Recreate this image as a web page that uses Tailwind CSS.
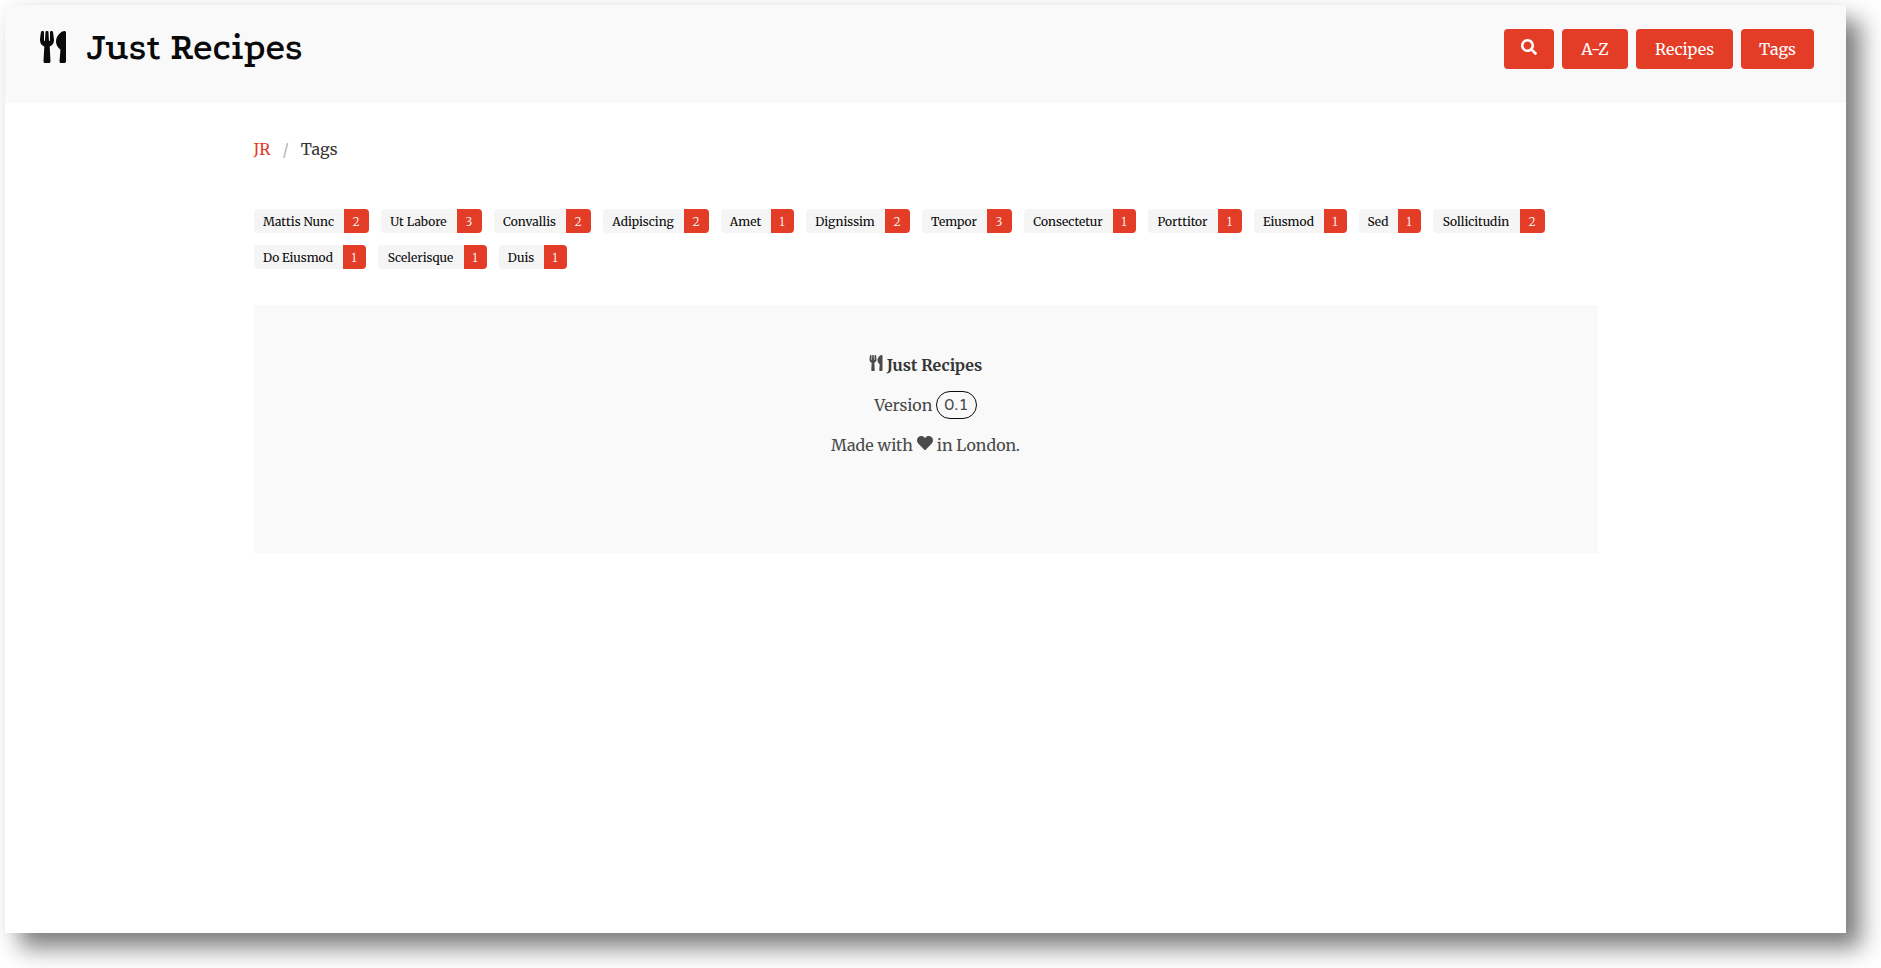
<!DOCTYPE html>
<html lang="en">
<head>
<meta charset="utf-8">
<meta name="viewport" content="width=device-width, initial-scale=1">
<title>Just Recipes – Tags</title>
<script src="https://cdn.jsdelivr.net/npm/@tailwindcss/browser@4"></script>
</head>
<body class="flex min-h-screen bg-white pt-[5px] pr-[35px] pb-[35px] pl-[5px] font-['Merriweather','DejaVu_Serif_Condensed','DejaVu_Serif',serif] text-base leading-6 text-[#4a4a4a]">
<svg class="hidden" aria-hidden="true">
  <symbol id="utensils" viewBox="0 0 416 512"><path d="M207.9 15.2c.8 4.7 16.1 94.5 16.1 128.8 0 52.3-27.8 89.6-68.9 104.6L168 486.7c.7 13.7-10.2 25.3-24 25.3H80c-13.7 0-24.7-11.5-24-25.3l12.9-238.1C27.7 233.6 0 196.2 0 144 0 109.6 15.3 19.9 16.1 15.2 19.3-5.1 61.4-5.4 64 16.3v141.2c1.3 3.4 15.1 3.2 16 0 1.4-25.3 7.9-139.2 8-141.8 3.3-20.8 44.7-20.8 47.9 0 .2 2.7 6.6 116.5 8 141.8.9 3.2 14.8 3.4 16 0V16.3c2.6-21.6 44.8-21.4 47.9-1.1zm119.2 285.7l-15 185.1c-1.2 14 9.9 26 23.9 26h56c13.3 0 24-10.7 24-24V24c0-13.2-10.7-24-24-24-82.5 0-221.4 178.5-64.9 300.9z"/></symbol>
</svg>
<div class="flex-1 bg-white shadow-[15px_15px_22px_rgba(0,0,0,0.5),0_0_14px_rgba(0,0,0,0.04)]">
  <header class="flex h-[98px] items-start justify-between bg-[#f9f9f9] pr-8 pl-[35px]">
    <a href="#" class="flex items-center gap-5 pt-[18px] text-[#0a0a0a]">
      <svg class="h-8 w-[26px] fill-current" aria-hidden="true"><use href="#utensils"/></svg>
      <h1 class="font-['Podkova','DejaVu_Serif',serif] text-[38px] leading-[48px] font-semibold">Just Recipes</h1>
    </a>
    <nav class="flex gap-2 pt-6 text-white" aria-label="Main">
      <button type="button" aria-label="Search" class="flex h-10 w-[50px] justify-center rounded bg-[#e43d27] pt-[10px]">
        <svg class="size-4 fill-current" viewBox="0 0 512 512" aria-hidden="true"><path d="M505 442.7L405.3 343c-4.5-4.5-10.6-7-17-7H372c27.6-35.3 44-79.7 44-128C416 93.1 322.9 0 208 0S0 93.1 0 208s93.1 208 208 208c48.3 0 92.7-16.4 128-44v16.3c0 6.4 2.5 12.5 7 17l99.7 99.7c9.4 9.4 24.6 9.4 33.9 0l28.3-28.3c9.4-9.4 9.4-24.6.1-34zM208 336c-70.7 0-128-57.2-128-128 0-70.7 57.2-128 128-128 70.7 0 128 57.2 128 128 0 70.7-57.2 128-128 128z"/></svg>
      </button>
      <a href="#" class="flex h-10 w-[66px] items-center justify-center rounded bg-[#e43d27]">A-Z</a>
      <a href="#" class="flex h-10 w-[97px] items-center justify-center rounded bg-[#e43d27]">Recipes</a>
      <a href="#" class="flex h-10 w-[73px] items-center justify-center rounded bg-[#e43d27]">Tags</a>
    </nav>
  </header>
  <main class="mx-auto max-w-[1344px]">
    <nav class="flex pt-[34px]" aria-label="Breadcrumb">
      <a href="#" class="text-[#e43d27]">JR</a>
      <span class="px-3 text-[#b5b5b5]">/</span>
      <a href="#" class="text-[#363636]" aria-current="page">Tags</a>
    </nav>
    <div class="flex flex-wrap gap-3 pt-12 text-xs text-[#0a0a0a]">
      <a href="#" class="flex h-6 overflow-hidden rounded bg-[#f5f5f5] leading-[26px]"><span class="w-[90px] text-center">Mattis Nunc</span><span class="w-[25px] bg-[#e43d27] text-center font-light text-white">2</span></a>
      <a href="#" class="flex h-6 overflow-hidden rounded bg-[#f5f5f5] leading-[26px]"><span class="w-[76px] text-center">Ut Labore</span><span class="w-[25px] bg-[#e43d27] text-center font-light text-white">3</span></a>
      <a href="#" class="flex h-6 overflow-hidden rounded bg-[#f5f5f5] leading-[26px]"><span class="w-[72px] text-center">Convallis</span><span class="w-[25px] bg-[#e43d27] text-center font-light text-white">2</span></a>
      <a href="#" class="flex h-6 overflow-hidden rounded bg-[#f5f5f5] leading-[26px]"><span class="w-[81px] text-center">Adipiscing</span><span class="w-[25px] bg-[#e43d27] text-center font-light text-white">2</span></a>
      <a href="#" class="flex h-6 overflow-hidden rounded bg-[#f5f5f5] leading-[26px]"><span class="w-[50px] text-center">Amet</span><span class="w-[23px] bg-[#e43d27] text-center font-light text-white">1</span></a>
      <a href="#" class="flex h-6 overflow-hidden rounded bg-[#f5f5f5] leading-[26px]"><span class="w-[79px] text-center">Dignissim</span><span class="w-[25px] bg-[#e43d27] text-center font-light text-white">2</span></a>
      <a href="#" class="flex h-6 overflow-hidden rounded bg-[#f5f5f5] leading-[26px]"><span class="w-[65px] text-center">Tempor</span><span class="w-[25px] bg-[#e43d27] text-center font-light text-white">3</span></a>
      <a href="#" class="flex h-6 overflow-hidden rounded bg-[#f5f5f5] leading-[26px]"><span class="w-[89px] text-center">Consectetur</span><span class="w-[23px] bg-[#e43d27] text-center font-light text-white">1</span></a>
      <a href="#" class="flex h-6 overflow-hidden rounded bg-[#f5f5f5] leading-[26px]"><span class="w-[70px] text-center">Porttitor</span><span class="w-6 bg-[#e43d27] text-center font-light text-white">1</span></a>
      <a href="#" class="flex h-6 overflow-hidden rounded bg-[#f5f5f5] leading-[26px]"><span class="w-[70px] text-center">Eiusmod</span><span class="w-[23px] bg-[#e43d27] text-center font-light text-white">1</span></a>
      <a href="#" class="flex h-6 overflow-hidden rounded bg-[#f5f5f5] leading-[26px]"><span class="w-[39px] text-center">Sed</span><span class="w-[23px] bg-[#e43d27] text-center font-light text-white">1</span></a>
      <a href="#" class="flex h-6 overflow-hidden rounded bg-[#f5f5f5] leading-[26px]"><span class="w-[87px] text-center">Sollicitudin</span><span class="w-[25px] bg-[#e43d27] text-center font-light text-white">2</span></a>
      <a href="#" class="flex h-6 overflow-hidden rounded bg-[#f5f5f5] leading-[26px]"><span class="w-[89px] text-center">Do Eiusmod</span><span class="w-[23px] bg-[#e43d27] text-center font-light text-white">1</span></a>
      <a href="#" class="flex h-6 overflow-hidden rounded bg-[#f5f5f5] leading-[26px]"><span class="w-[86px] text-center">Scelerisque</span><span class="w-[23px] bg-[#e43d27] text-center font-light text-white">1</span></a>
      <a href="#" class="flex h-6 overflow-hidden rounded bg-[#f5f5f5] leading-[26px]"><span class="w-[45px] text-center">Duis</span><span class="w-[23px] bg-[#e43d27] text-center font-light text-white">1</span></a>
    </div>
    <footer class="mt-9 flex flex-col items-center gap-4 bg-[#f9f9f9] px-6 pt-12 pb-24">
      <p class="flex gap-1"><svg class="mt-[2px] h-4 w-[14px] fill-current" aria-hidden="true"><use href="#utensils"/></svg><strong class="font-bold text-[#363636]">Just Recipes</strong></p>
      <p class="flex h-6 items-center gap-1">Version <span class="rounded-full border border-[#0a0a0a] px-[7px] font-['Varela_Round','Quicksand','Lato',sans-serif] leading-[26px]">0.1</span></p>
      <p class="flex gap-1">Made with <svg class="mt-[2px] size-4 fill-current" viewBox="0 0 512 512" role="img" aria-label="love"><path d="M462.3 62.6C407.5 15.9 326 24.3 275.7 76.2L256 96.5l-19.7-20.3C186.1 24.3 104.5 15.9 49.7 62.6c-62.8 53.6-66.1 149.8-9.9 207.9l193.5 199.8c12.5 12.9 32.8 12.9 45.3 0l193.5-199.8c56.3-58.1 53-154.3-9.8-207.9z"/></svg> in London.</p>
    </footer>
  </main>
</div>
</body>
</html>
